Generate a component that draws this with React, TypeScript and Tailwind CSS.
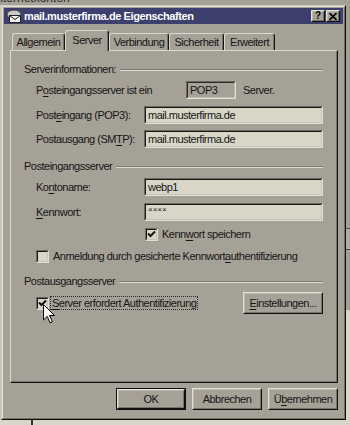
import React from "react";

const U = ({ children }: { children: React.ReactNode }) => (
  <span className="underline decoration-1 underline-offset-[2px]">{children}</span>
);

function Edit({ children, w = "w-[179px]" }: { children?: React.ReactNode; w?: string }) {
  return (
    <div className={"h-[18px] shrink-0 border border-t-[#6e6960] border-l-[#6e6960] border-b-[#e2dfd6] border-r-[#e2dfd6] " + w}>
      <div className="h-full border border-t-[#161616] border-l-[#161616] border-b-[#c7c3b9] border-r-[#c7c3b9] bg-[#d9d6c8] pl-[2px] flex items-center text-[11px] leading-none tracking-[-0.5px]">
        {children}
      </div>
    </div>
  );
}

function Check({ checked }: { checked?: boolean }) {
  return (
    <div className="w-[13px] h-[13px] shrink-0 border border-t-[#6e6960] border-l-[#6e6960] border-b-[#e2dfd6] border-r-[#e2dfd6]">
      <div className="h-full border border-t-[#161616] border-l-[#161616] border-b-[#c7c3b9] border-r-[#c7c3b9] bg-[#d9d6c8] flex items-center justify-center">
        {checked && (
          <svg width="9" height="9" viewBox="0 0 9 9">
            <path d="M1 3.5 L3.5 6 L8 1.5" fill="none" stroke="#111" strokeWidth="2" />
          </svg>
        )}
      </div>
    </div>
  );
}

function Btn({ children, def, w }: { children: React.ReactNode; def?: boolean; w: string }) {
  const face = (
    <div className="h-full border border-t-[#e3e0d8] border-l-[#e3e0d8] border-b-[#101010] border-r-[#101010]">
      <div className="h-full border border-t-[#bdb8ae] border-l-[#bdb8ae] border-b-[#77726a] border-r-[#77726a] flex items-center justify-center text-[11px] leading-none tracking-[-0.5px]">
        {children}
      </div>
    </div>
  );
  if (def) {
    return <div className={"h-[22px] border border-[#101010] " + w}>{face}</div>;
  }
  return <div className={"h-[22px] " + w}>{face}</div>;
}

function Group({ label }: { label: string }) {
  return (
    <div className="h-[13px] flex items-center gap-[4px]">
      <span className="text-[11px] leading-[13px] tracking-[-0.5px]">{label}</span>
      <div className="flex-1 h-[2px] border-t border-b border-t-[#7f7a71] border-b-[#dcd8cf]" />
    </div>
  );
}

function Tab({ label, w, active }: { label: string; w: string; active?: boolean }) {
  if (active) {
    return (
      <div
        className={
          "relative z-10 -mb-[1px] h-[21px] bg-[#a6a197] rounded-t-[3px] border-t border-l border-r border-t-[#dcd8cf] border-l-[#dcd8cf] border-r-[#141414] shadow-[inset_-1px_0_0_#77726a] flex justify-center pt-[3px] text-[11px] leading-[13px] tracking-[-0.5px] " +
          w
        }
      >
        {label}
      </div>
    );
  }
  return (
    <div
      className={
        "h-[17px] rounded-t-[3px] border-t border-l border-r border-t-[#dcd8cf] border-l-[#dcd8cf] border-r-[#141414] shadow-[inset_-1px_0_0_#77726a] flex items-center justify-center text-[11px] leading-[13px] tracking-[-0.5px] " +
        w
      }
    >
      {label}
    </div>
  );
}

function TitleIcon() {
  return (
    <svg width="16" height="15" viewBox="0 0 16 15">
      <ellipse cx="8" cy="5.5" rx="7" ry="4.5" fill="#c9c9c9" stroke="#3a3a3a" />
      <rect x="3.5" y="6.5" width="11" height="7" fill="#f4f4f4" stroke="#222" />
      <path d="M3.5 6.5 L9 10.5 L14.5 6.5" fill="none" stroke="#222" />
    </svg>
  );
}

function CapBtn({ children }: { children: React.ReactNode }) {
  return (
    <div className="w-[14px] h-[12px] border border-t-[#e3e0d8] border-l-[#e3e0d8] border-b-[#101010] border-r-[#101010] bg-[#a6a197]">
      <div className="h-full border border-t-[#bdb8ae] border-l-[#bdb8ae] border-b-[#77726a] border-r-[#77726a] flex items-center justify-center">
        {children}
      </div>
    </div>
  );
}

function Dialog() {
  return (
    <div className="w-[345px] h-[415px] shrink-0 border border-t-[#cfcbc2] border-l-[#cfcbc2] border-b-[#0e0e0e] border-r-[#0e0e0e]">
      <div className="h-full border border-t-[#e4e1d9] border-l-[#e4e1d9] border-b-[#77726a] border-r-[#77726a] bg-[#a6a197] p-[1px] flex flex-col">
        {/* Title bar */}
        <div className="h-[16px] shrink-0 bg-[#3d3f6e] flex items-center pl-[2px] pr-[3px]">
          <TitleIcon />
          <span className="ml-[2px] text-white font-bold text-[11px] leading-none tracking-[-0.4px]">
            mail.musterfirma.de Eigenschaften
          </span>
          <div className="ml-auto flex gap-[1px]">
            <CapBtn>
              <span className="text-[10px] font-bold leading-none text-black">?</span>
            </CapBtn>
            <CapBtn>
              <svg width="8" height="7" viewBox="0 0 8 7">
                <path d="M0.5 0 L7.5 7 M7.5 0 L0.5 7" stroke="#000" strokeWidth="1.6" />
              </svg>
            </CapBtn>
          </div>
        </div>

        {/* Tabs */}
        <div className="mt-[6px] ml-[6px] h-[20px] flex items-end pl-[2px]">
          <Tab label="Allgemein" w="w-[53px]" />
          <Tab label="Server" w="w-[44px]" active />
          <Tab label="Verbindung" w="w-[60px]" />
          <Tab label="Sicherheit" w="w-[55px]" />
          <Tab label="Erweitert" w="w-[51px]" />
        </div>

        {/* Panel */}
        <div className="ml-[6px] w-[328px] h-[333px] shrink-0 border border-t-[#dcd8cf] border-l-[#dcd8cf] border-b-[#141414] border-r-[#141414] shadow-[inset_-1px_-1px_0_#77726a]">
          <div className="flex flex-col pl-[13px] pr-[14px] text-[11px] leading-[13px] tracking-[-0.5px]">
            <div className="mt-[12px]">
              <Group label="Serverinformationen:" />
            </div>
            <div className="mt-[5px] pl-[12px] h-[18px] flex items-center">
              <span className="w-[150px] shrink-0">
                P<U>o</U>steingangsserver ist ein
              </span>
              <div className="w-[50px] h-[18px] border border-t-[#6e6960] border-l-[#6e6960] border-b-[#e2dfd6] border-r-[#e2dfd6]">
                <div className="h-full border border-t-[#2a2a2a] border-l-[#2a2a2a] border-b-[#bfbab0] border-r-[#bfbab0] pl-[2px] flex items-center leading-none">
                  POP3
                </div>
              </div>
              <span className="ml-[7px]">Server.</span>
            </div>
            <div className="mt-[7px] pl-[12px] flex items-center">
              <span className="w-[108px] shrink-0">
                Post<U>e</U>ingang (POP3):
              </span>
              <Edit>mail.musterfirma.de</Edit>
            </div>
            <div className="mt-[6px] pl-[12px] flex items-center">
              <span className="w-[108px] shrink-0">
                Postausgang (SM<U>T</U>P):
              </span>
              <Edit>mail.musterfirma.de</Edit>
            </div>

            <div className="mt-[12px]">
              <Group label="Posteingangsserver" />
            </div>
            <div className="mt-[5px] pl-[12px] flex items-center">
              <span className="w-[108px] shrink-0">
                Ko<U>n</U>toname:
              </span>
              <Edit>webp1</Edit>
            </div>
            <div className="mt-[7px] pl-[12px] flex items-center">
              <span className="w-[108px] shrink-0">
                <U>K</U>ennwort:
              </span>
              <Edit>
                <span className="text-[8px] self-start mt-[1px] tracking-[0px]">××××</span>
              </Edit>
            </div>
            <div className="mt-[7px] pl-[121px] h-[13px] flex items-center gap-[4px]">
              <Check checked />
              <span>
                Kenn<U>w</U>ort speichern
              </span>
            </div>
            <div className="mt-[9px] pl-[12px] h-[13px] flex items-center gap-[4px]">
              <Check />
              <span>
                Anmeldung durch gesicherte Kennwort<U>a</U>uthentifizierung
              </span>
            </div>

            <div className="mt-[12px]">
              <Group label="Postausgangsserver" />
            </div>
            <div className="mt-[4px] pl-[12px] h-[22px] flex items-center">
              <Check checked />
              <span className="ml-[1px] px-[1px] border border-dotted border-[#2a2a2a] leading-[12px]">
                <U>S</U>erver erfordert Authentifizierung
              </span>
              <div className="ml-auto">
                <Btn w="w-[80px]">
                  <U>E</U>instellungen...
                </Btn>
              </div>
            </div>
          </div>
        </div>

        {/* Buttons */}
        <div className="mt-[5px] ml-[6px] w-[328px] flex justify-end gap-[6px]">
          <Btn w="w-[70px]" def>
            OK
          </Btn>
          <Btn w="w-[70px]">Abbrechen</Btn>
          <Btn w="w-[70px]">
            Ü<U>b</U>ernehmen
          </Btn>
        </div>
      </div>
    </div>
  );
}

export default function App() {
  return (
    <div className="relative w-[350px] h-[425px] overflow-hidden bg-[#a6a197] text-[#151515] font-['Liberation_Sans',Arial,sans-serif] flex flex-col">
      {/* window behind */}
      <div className="h-[5px] shrink-0 overflow-hidden">
        <div className="-mt-[8px] -ml-[7px] text-[12px] leading-[13px] text-[#2b2b2b]">Internetkonten</div>
      </div>

      <div className="flex h-[415px] shrink-0">
        <div className="w-[1px] bg-[#c8c4ba]" />
        <Dialog />
        <div className="w-[4px] flex flex-col">
          <div className="h-[223px] bg-[#a6a197]" />
          <div className="h-[1px] bg-[#4a4a4a]" />
          <div className="h-[20px] bg-[#b3aea5]" />
          <div className="h-[1px] bg-[#4a4a4a]" />
          <div className="h-[60px] bg-[#a6a197]" />
          <div className="flex-1 bg-[#d8d5c9]" />
        </div>
      </div>

      <div className="flex-1 bg-[#d8d5c9] flex">
        <div className="ml-[31px] w-[2px] bg-[#333]" />
      </div>

      {/* mouse pointer */}
      <svg className="absolute left-[43px] top-[304px]" width="13" height="20" viewBox="0 0 13 20">
        <path d="M0.5 0.5 L0.5 16 L4.2 12.4 L7 18.8 L9.4 17.8 L6.6 11.5 L11.5 11.5 Z" fill="#fff" stroke="#000" strokeWidth="1" />
      </svg>
    </div>
  );
}
